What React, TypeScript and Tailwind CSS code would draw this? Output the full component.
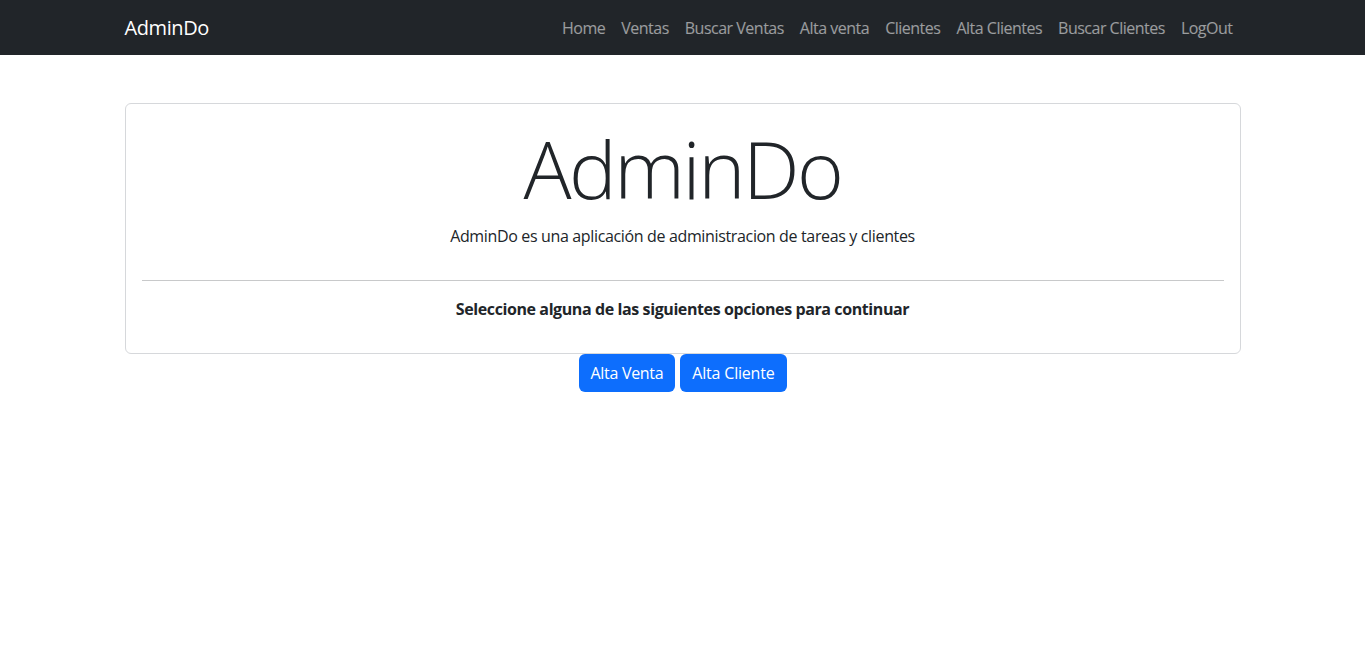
import React from "react";

export default function App() {
  const links = ["Home", "Ventas", "Buscar Ventas", "Alta venta", "Clientes", "Alta Clientes", "Buscar Clientes", "LogOut"];
  return (
    <div className="min-h-[646px] bg-white text-[#212529] font-['Open_Sans','Noto_Sans',sans-serif]">
      <nav className="h-[55px] bg-[#212529]">
        <div className="mx-auto flex h-full max-w-[1140px] items-center justify-between px-3">
          <a className="text-[20px] leading-[30px] text-white tracking-[-0.4px]">AdminDo</a>
          <ul className="flex">
            {links.map((l) => (
              <li key={l}>
                <a className="block px-2 py-2 text-[16px] leading-6 text-white/55 tracking-[-0.5px]">{l}</a>
              </li>
            ))}
          </ul>
        </div>
      </nav>
      <div className="mx-auto max-w-[1140px] px-3">
        <div className="mt-12 rounded-md border border-[#d6d8db] p-4 text-center">
          <h1 className="mb-2 text-[80px] font-light leading-[96px] tracking-[-2.4px]">AdminDo</h1>
          <p className="text-[16px] leading-6 tracking-[-0.35px]">
            AdminDo es una aplicación de administracion de tareas y clientes
          </p>
          <hr className="mt-8 mb-4 border-t border-[#c8c9ca]" />
          <p className="mb-4 text-[16px] font-bold leading-6 tracking-[-0.4px]">
            Seleccione alguna de las siguientes opciones para continuar
          </p>
        </div>
        <div className="flex justify-center gap-[5px]">
          <button className="h-[38px] rounded-md bg-[#0d6efd] px-3 text-[16px] text-white tracking-[-0.3px]">Alta Venta</button>
          <button className="h-[38px] rounded-md bg-[#0d6efd] px-3 text-[16px] text-white tracking-[-0.2px]">Alta Cliente</button>
        </div>
      </div>
    </div>
  );
}
